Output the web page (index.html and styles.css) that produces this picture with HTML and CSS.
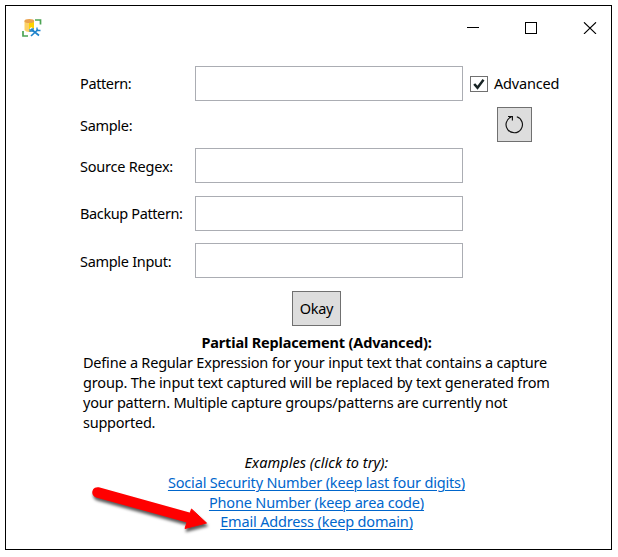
FILE: index.html
```
<!DOCTYPE html>
<html lang="en">
<head>
<meta charset="utf-8">
<title>Pattern editor</title>
<link rel="stylesheet" href="styles.css">
</head>
<body>
<main class="window">
  <header class="titlebar">
    <svg class="app-icon" width="20" height="20" viewBox="0 0 20 20">
      <path d="M13 2H18.500V6.500M1 13V18H6" fill="none" stroke="#4ca454" stroke-width="1.700"/>
      <path d="M2.500 3V12Q4 14 7 14V3Z" fill="#fbd168"/>
      <path d="M7 3V14Q10 14 12 12V3Z" fill="#ffd200"/>
      <ellipse cx="7.300" cy="3" rx="4.900" ry="2" fill="#eaa24c"/>
      <path d="M8 10.500L17 17.500M17 10.500L9 18" fill="none" stroke="#fff" stroke-width="3.500"/>
      <path d="M9 11L17 17.500M16 11.500L9 18" fill="none" stroke="#1f83cb" stroke-width="1.700"/>
      <path d="M8 11V13H11V10M15 9.500V12.500H18.500" fill="none" stroke="#1f83cb" stroke-width="1.300"/>
    </svg>
    <svg class="controls" width="130" height="12" viewBox="0 0 130 12" fill="none" stroke="#000">
      <path d="M0 5.500H12"/>
      <rect x="58.500" y=".5" width="11" height="11"/>
      <path d="M117 .3L129 11.900M129 .3L117 11.900" stroke-width="1.150"/>
    </svg>
  </header>

  <form class="form">
    <label class="label pattern" for="pattern">Pattern:</label>
    <input class="field" id="pattern" type="text">
    <label class="advanced"><span class="checkbox"><svg width="16" height="14" viewBox="0 0 16 14"><path d="M3.200 7L6.500 10.700L12.500 2.800" fill="none" stroke="#182425" stroke-width="2.500"/></svg></span><span class="advanced-text">Advanced</span></label>

    <span class="label sample">Sample:</span>
    <button class="button refresh" type="button" aria-label="Refresh"><svg width="33" height="33" viewBox="0 0 33 33" fill="none" stroke="#111" stroke-width="1.150"><path d="M18.800 8.800A8.200 8.200 0 1 1 13.400 8.900"/><path d="M10 8.500H14.400V12.600"/></svg></button>

    <label class="label regex" for="regex">Source Regex:</label>
    <input class="field" id="regex" type="text">
    <label class="label backup" for="backup">Backup Pattern:</label>
    <input class="field" id="backup" type="text">
    <label class="label input" for="input">Sample Input:</label>
    <input class="field" id="input" type="text">
  </form>

  <button class="button okay" type="button">Okay</button>

  <section class="help">
    <h1 class="heading">Partial Replacement (Advanced):</h1>
    <p class="description">
      <span class="line l1">Define a Regular Expression for your input text that contains a capture</span>
      <span class="line l2">group. The input text captured will be replaced by text generated from</span>
      <span class="line l3">your pattern. Multiple capture groups/patterns are currently not</span>
      <span class="line l4">supported.</span>
    </p>
  </section>

  <nav class="examples">
    <em class="caption">Examples (click to try):</em>
    <a class="ssn" href="#">Social Security Number (keep last four digits)</a>
    <a class="phone" href="#">Phone Number (keep area code)</a>
    <a class="email" href="#">Email Address (keep domain)</a>
  </nav>

  <svg class="arrow" width="130" height="56" viewBox="0 0 130 56">
    <path d="M8.500 12.400L101 38" stroke="#f00" stroke-width="10.500" stroke-linecap="round"/>
    <path d="M102.500 29L117.500 43L96 48.500L98.500 41Z" fill="#f00" stroke="#f00" stroke-width="1" stroke-linejoin="round"/>
  </svg>
</main>
</body>
</html>
```
FILE: styles.css
```
* { box-sizing: border-box; }

body {
  margin: 0;
  padding: 5px;
  background: #fff;
  color: #000;
  font: 14.5px/20px "Noto Sans", "Open Sans", sans-serif;
  letter-spacing: -0.3px;
}

.window {
  position: relative;
  width: 607px;
  height: 545px;
  border: 1px solid #000;
}

.titlebar {
  display: flex;
  justify-content: space-between;
  height: 60px;
  padding: 12px 14px 0 16px;
}

.controls { margin-top: 4px; }

.form {
  display: grid;
  grid-template-columns: 115px 268px 1fr;
  grid-template-rows: 35px 35px 42px 41px 35px;
  row-gap: 6px;
  align-items: start;
  margin-left: 74px;
}

.label {
  grid-column: 1;
  padding-top: 8px;
  white-space: nowrap;
}

.label.pattern,
.label.backup {
  padding-top: 7px;
  letter-spacing: -0.38px;
}

.label.regex { letter-spacing: -0.22px; }

.field {
  grid-column: 2;
  width: 268px;
  height: 35px;
  margin: 0;
  border: 1px solid #abadb3;
  background: #fff;
}

.advanced {
  display: flex;
  align-items: center;
  gap: 6px;
  height: 35px;
  padding-left: 7px;
}

.advanced-text {
  padding-bottom: 2px;
  letter-spacing: -0.2px;
}

.checkbox {
  width: 18px;
  height: 16px;
  border: 1px solid #707070;
}

.checkbox svg { display: block; }

.button {
  height: 35px;
  padding: 0;
  border: 1px solid #707070;
  border-radius: 0;
  background: #ddd;
  color: #000;
  font: inherit;
  letter-spacing: inherit;
}

.refresh {
  grid-column: 3;
  width: 35px;
  margin-left: 34px;
}

.refresh svg { display: block; }

.okay {
  display: block;
  width: 49px;
  margin: 13px 0 0 286px;
  padding-bottom: 2px;
}

.help { padding: 6px 61px 0 77px; }

.heading {
  margin: 0;
  font-size: 14.5px;
  line-height: 20px;
  letter-spacing: -0.16px;
  text-align: center;
}

.description { margin: 0; }

.line {
  display: block;
  white-space: nowrap;
}

.l1 { letter-spacing: -0.215px; }
.l2 { letter-spacing: -0.17px; }
.l3 { letter-spacing: -0.2px; }
.l4 { letter-spacing: -0.25px; }

.examples {
  display: flex;
  flex-direction: column;
  align-items: center;
  margin-top: 20px;
  padding-left: 16px;
}

.caption { letter-spacing: 0.05px; }

.examples a {
  color: #0066cc;
  letter-spacing: -0.17px;
  text-decoration: underline;
  text-decoration-thickness: 1px;
  text-underline-offset: 2px;
}

.examples .email { margin-top: -1px; }

.arrow {
  position: absolute;
  left: 83px;
  top: 474px;
  filter: drop-shadow(1px 3px 1.5px rgb(0 0 0 / 65%));
}
```
